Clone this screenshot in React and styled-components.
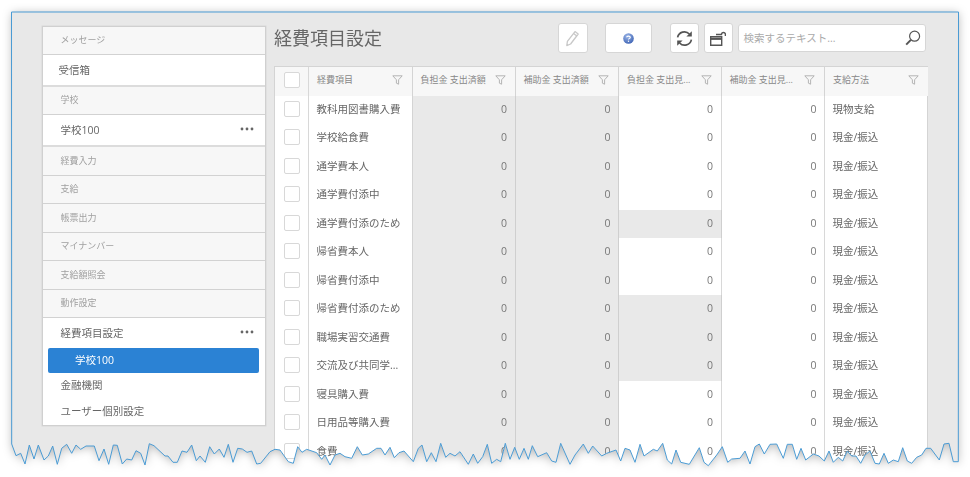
import React from "react";
import styled, { createGlobalStyle } from "styled-components";

const edge = [[11.7,444],[16,455.7],[20.7,453.3],[25,464],[29.3,445],[34,459],[38.3,445],[44,460],[48.3,456],[52.7,446],[57.3,464.3],[61.7,448.3],[66.7,444.3],[71.7,453.3],[76,445],[80.7,449.3],[86,446],[94.3,446],[99,460.7],[104,449],[108.7,464.3],[113.3,445],[117.3,445.3],[122.3,464],[126.7,459],[131.7,460],[136,450.7],[140.7,453.3],[145,465],[149.3,443.7],[154,445.7],[165,456],[168,456],[173,462.3],[177.3,462.3],[182,451],[187,452.3],[191.7,445],[196.3,460.7],[200,456],[205.3,462.3],[209.7,446.7],[214.3,454],[219.3,449],[224,457.3],[228.3,444.3],[233,462.3],[237.7,448.3],[242.3,449],[247,452.3],[251.7,451],[256.7,464],[260.7,463.3],[270,451.7],[275,449.3],[280,450],[288.3,461.7],[293.3,463.3],[297.7,446.7],[302,452.3],[306.7,449.3],[316.7,452.7],[321.7,459.3],[325,455],[330,465],[335,455],[340,453.3],[345,456.7],[351.7,458.3],[357.3,446.7],[362.3,455],[368.3,454],[376.7,448.3],[381,448.3],[385,455],[390,447.3],[394.3,457.7],[399,452.7],[404,451],[413.3,461.7],[418.3,448.3],[422,445],[426.7,461.7],[431.3,452.7],[436,461.7],[440.7,443.3],[445.7,457.3],[450,453.3],[455,456],[460,451.7],[468.3,464.3],[473.3,454],[477.7,463.3],[482.7,456.7],[487.3,444.3],[491.7,463.3],[496.7,459.3],[500.7,461.7],[505.3,443.3],[510,459.3],[514.7,447.3],[519.3,459.3],[524,448.3],[528.3,459.3],[532.3,445.7],[537.7,456.7],[546.7,452.7],[551.7,461],[556,462.3],[560.7,443.3],[570,464.3],[575,455],[583.3,444],[588.3,453.3],[592.7,446],[601.7,456],[606.7,453.3],[616,450],[620.7,461],[625,448.3],[630,450],[635,462.3],[640,444.3],[644,456],[653.3,449.3],[657.3,451],[662.7,443.3],[667.3,460],[671.7,464],[676,450],[680.7,462.3],[689.3,464.3],[699.3,447.7],[704,462.3],[708.3,465.7],[716.7,455],[722.3,446.7],[727.7,462.3],[731.7,459],[740,458.3],[745,451],[750,464],[755,446.7],[759.3,444],[764.3,454],[770,444.3],[776.7,444],[783.3,458.3],[787.3,444.3],[792.3,444.3],[796.7,459.3],[801,448.3],[805.7,460],[813.3,454],[819,456],[824.3,461],[829,451],[833.3,462.3],[838.3,457.3],[842.7,461],[847.3,451],[851.7,456],[856,456],[860.7,463.3],[865,455],[870,451],[875,463.3],[879.3,464],[884,453.3],[888.3,463.3],[893.3,460],[898.3,461.7],[902.7,447.7],[907.3,461],[911.7,463.3],[916.7,457.3],[921.7,455],[926,448.3],[930.7,448.3],[939.3,460],[944,444],[949,443.3],[953.3,461.7],[958.3,461.7]];

const WIN_X = 11.5;
const WIN_Y = 12;
const WIN_R = 958.5;
const outline = [[WIN_X, WIN_Y], [WIN_R, WIN_Y], ...edge.slice().reverse()];
const clip = `polygon(${outline.map(([x, y]) => `${x - WIN_X}px ${y - WIN_Y}px`).join(",")})`;
const outlinePts = outline.map((p) => p.join(",")).join(" ");

const GlobalStyle = createGlobalStyle`
  html, body { margin: 0; padding: 0; background: #fff; overflow: hidden; }
  body { font-family: "Open Sans", "Noto Sans CJK JP", sans-serif; }
  * { box-sizing: border-box; }
`;

const Frame = styled.div`
  position: relative;
  width: 970px;
  height: 477px;
  padding: 12px 0 0 11.5px;
  overflow: hidden;
`;

const Shadow = styled.div`
  width: 947px;
  height: 454px;
  filter: drop-shadow(0 1px 5px rgba(0, 0, 0, 0.28));
`;

const Sheet = styled.div`
  width: 947px;
  height: 454px;
  background: #e8e8e8;
  padding: 14px 0 0 30px;
  display: flex;
  gap: 8px;
  align-items: flex-start;
  overflow: hidden;
`;

const Outline = styled.svg`
  position: absolute;
  left: 0;
  top: 0;
  pointer-events: none;
`;

const Sidebar = styled.nav`
  width: 224.5px;
  flex: none;
  background: #fff;
  border: 1px solid #d0d0d0;
  box-shadow: 0 0 0 0.5px #d8d8d8;
`;

const NavHeader = styled.div`
  height: ${(p) => p.$h || 28.5}px;
  display: flex;
  align-items: center;
  padding: 0 0 1px 18px;
  background: #f7f7f7;
  border-bottom: 1px solid #d2d2d2;
  color: #a0a0a0;
  font-size: 9px;
`;

const NavItem = styled.div`
  height: ${(p) => p.$h}px;
  display: flex;
  align-items: center;
  justify-content: space-between;
  padding: 0 11.5px 1px ${(p) => p.$indent ?? 18}px;
  color: #666;
  font-size: 10.5px;
  border-bottom: ${(p) => (p.$rule ? "2px solid #dcdcdc" : "none")};
`;

const SelectedItem = styled.div`
  height: 25px;
  margin: 0 6.5px 0 5.5px;
  display: flex;
  align-items: center;
  padding: 0 0 1px 27px;
  background: #2b82d4;
  border-radius: 2px;
  color: #fff;
  font-size: 10.5px;
`;

const Main = styled.main`
  width: 654px;
  flex: none;
  margin-top: -3px;
`;

const Toolbar = styled.div`
  height: 30px;
  margin-bottom: 13px;
  padding-right: 2.5px;
  display: flex;
  align-items: center;
`;

const Title = styled.h1`
  flex: 1;
  margin: 0 0 3px;
  font-size: 18px;
  font-weight: 400;
  color: #666;
  font-family: "Noto Sans CJK JP", sans-serif;
`;

const ToolButton = styled.button`
  width: ${(p) => p.$w}px;
  height: 30px;
  margin-left: ${(p) => p.$ml}px;
  padding: 0;
  display: flex;
  align-items: center;
  justify-content: center;
  background: #fff;
  border: 1px solid #d6d6d6;
  border-radius: 3px;
`;

const Search = styled.div`
  width: 188px;
  height: 28px;
  margin-left: 5px;
  padding: 0 4px 1px 5px;
  display: flex;
  align-items: center;
  justify-content: space-between;
  background: #fff;
  border: 1px solid #d6d6d6;
  border-radius: 3px;
  color: #aaa;
  font-size: 10.5px;
`;

const Table = styled.div`
  display: grid;
  grid-template-columns: 34px 103.5px 103px 103.5px 102.5px 103.5px 103px;
  grid-auto-rows: 28.5px;
  background: #fff;
  border: 1px solid #d4d4d4;
  border-bottom: none;
`;

const HeadCell = styled.div`
  display: flex;
  align-items: center;
  justify-content: space-between;
  padding: 0 9px 3px 8px;
  background: #f7f7f7;
  color: #888;
  font-size: 9px;
  white-space: nowrap;
  border-right: ${(p) => (p.$last ? "none" : "1px solid #d4d4d4")};
`;

const CheckCell = styled.div`
  display: flex;
  align-items: center;
  justify-content: center;
  padding-bottom: 2px;
  background: ${(p) => (p.$head ? "#f7f7f7" : "#fff")};
  border-right: 1px solid #d8d8d8;
`;

const Check = styled.span`
  width: 16px;
  height: 16px;
  background: #fff;
  border: 1px solid #d8d8d8;
  border-radius: 2px;
`;

const TextCell = styled.div`
  display: flex;
  align-items: center;
  padding: 0 0 3px 7.5px;
  color: #666;
  font-size: 10.5px;
  white-space: nowrap;
  border-right: ${(p) => (p.$last ? "none" : "1px solid #d4d4d4")};
`;

const NumCell = styled.div`
  display: flex;
  align-items: center;
  justify-content: flex-end;
  padding: 0 7.5px 2px 0;
  background: ${(p) => (p.$grey ? "#e9e9e9" : "#fff")};
  color: #777;
  font-size: 10.5px;
  border-right: 1px solid ${(p) => (p.$grey ? "#cfcfcf" : "#d8d8d8")};
`;

const Dots = () => (
  <svg width="14" height="4" viewBox="0 0 14 4">
    <circle cx="2" cy="2" r="1.4" fill="#666" />
    <circle cx="7" cy="2" r="1.4" fill="#666" />
    <circle cx="12" cy="2" r="1.4" fill="#666" />
  </svg>
);

const Funnel = () => (
  <svg width="11" height="10" viewBox="0 0 11 10" fill="none" stroke="#b4b4b4" strokeWidth="1">
    <path d="M.8 .8h9.4L6.6 4.8V9.2L4.4 8.2V4.8Z" strokeLinejoin="round" />
  </svg>
);

const Pencil = () => (
  <svg width="15" height="17" viewBox="0 0 15 17" fill="none" stroke="#c8c8c8" strokeWidth="1.3">
    <path d="M10 1.6 13.2 4 5.6 14 1.8 15.6 2.4 11.4Z" strokeLinejoin="round" />
    <path d="M8.6 3.4 11.8 5.9" />
  </svg>
);

const HelpGlobe = () => (
  <svg width="11" height="11" viewBox="0 0 11 11">
    <defs>
      <radialGradient id="globe" cx="40%" cy="30%" r="75%">
        <stop offset="0" stopColor="#9db7e8" />
        <stop offset="1" stopColor="#3c62b4" />
      </radialGradient>
    </defs>
    <circle cx="5.5" cy="5.5" r="5.3" fill="url(#globe)" />
    <path d="M3.6 4.2C3.8 2.7 7.2 2.7 7.3 4.2 7.4 5.4 5.5 5.3 5.5 6.6" fill="none" stroke="#fff" strokeWidth="1.1" />
    <circle cx="5.5" cy="8.3" r=".7" fill="#fff" />
  </svg>
);

const Refresh = () => (
  <svg width="17" height="17" viewBox="0 0 17 17" fill="none" stroke="#555" strokeWidth="1.7">
    <path d="M1.6 7.4A6.9 6.9 0 0 1 13.4 4" />
    <path d="M15.8 1.2V6.6H10.4Z" fill="#555" stroke="none" />
    <path d="M15.4 9.6A6.9 6.9 0 0 1 3.6 13" />
    <path d="M1.2 15.8V10.4H6.6Z" fill="#555" stroke="none" />
  </svg>
);

const Unlock = () => (
  <svg width="16" height="15" viewBox="0 0 16 15" fill="none" stroke="#555">
    <path d="M.7 5.7H11.7V14.3H.7Z" strokeWidth="1.4" />
    <path d="M.7 7.8H11.7" strokeWidth="2.2" />
    <path d="M6 3.5H11.5V3A2 2 0 0 1 15.4 3V5" strokeWidth="1.4" />
  </svg>
);

const Magnifier = () => (
  <svg width="16" height="16" viewBox="0 0 16 16" fill="none" stroke="#555">
    <circle cx="9.6" cy="6.2" r="5" strokeWidth="1.2" />
    <path d="M5.9 9.9 1.2 14.6" strokeWidth="2" />
  </svg>
);

const headers = ["経費項目", "負担金 支出済額", "補助金 支出済額", "負担金 支出見...", "補助金 支出見...", "支給方法"];
const rows = [
  ["教科用図書購入費", "現物支給"],
  ["学校給食費", "現金/振込"],
  ["通学費本人", "現金/振込"],
  ["通学費付添中", "現金/振込"],
  ["通学費付添のため", "現金/振込", true],
  ["帰省費本人", "現金/振込"],
  ["帰省費付添中", "現金/振込"],
  ["帰省費付添のため", "現金/振込", true],
  ["職場実習交通費", "現金/振込", true],
  ["交流及び共同学...", "現金/振込", true],
  ["寝具購入費", "現金/振込"],
  ["日用品等購入費", "現金/振込"],
  ["食費", "現金/振込"],
];

export default function App() {
  return (
    <>
      <GlobalStyle />
      <Frame>
        <Shadow>
          <Sheet style={{ clipPath: clip }}>
            <Sidebar>
              <NavHeader $h={27.5}>メッセージ</NavHeader>
              <NavItem $h={32.5} $indent={16} $rule>受信箱</NavItem>
              <NavHeader $h={27.5}>学校</NavHeader>
              <NavItem $h={32.5} $rule>学校100<Dots /></NavItem>
              <NavHeader>経費入力</NavHeader>
              <NavHeader>支給</NavHeader>
              <NavHeader>帳票出力</NavHeader>
              <NavHeader>マイナンバー</NavHeader>
              <NavHeader>支給額照会</NavHeader>
              <NavHeader>動作設定</NavHeader>
              <NavItem $h={29.5}>経費項目設定<Dots /></NavItem>
              <SelectedItem>学校100</SelectedItem>
              <NavItem $h={25}>金融機関</NavItem>
              <NavItem $h={27}>ユーザー個別設定</NavItem>
            </Sidebar>
            <Main>
              <Toolbar>
                <Title>経費項目設定</Title>
                <ToolButton $w={30} $ml={0}><Pencil /></ToolButton>
                <ToolButton $w={47} $ml={17}><HelpGlobe /></ToolButton>
                <ToolButton $w={29} $ml={18.5}><Refresh /></ToolButton>
                <ToolButton $w={29} $ml={4.5}><Unlock /></ToolButton>
                <Search>
                  検索するテキスト...
                  <Magnifier />
                </Search>
              </Toolbar>
              <Table>
                <CheckCell $head><Check /></CheckCell>
                {headers.map((h, i) => (
                  <HeadCell key={h + i} $last={i === headers.length - 1}>
                    {h}
                    <Funnel />
                  </HeadCell>
                ))}
                {rows.map(([name, method, shaded]) => (
                  <React.Fragment key={name}>
                    <CheckCell><Check /></CheckCell>
                    <TextCell>{name}</TextCell>
                    <NumCell $grey>0</NumCell>
                    <NumCell $grey>0</NumCell>
                    <NumCell $grey={shaded}>0</NumCell>
                    <NumCell>0</NumCell>
                    <TextCell $last>{method}</TextCell>
                  </React.Fragment>
                ))}
              </Table>
            </Main>
          </Sheet>
        </Shadow>
        <Outline width="970" height="477" viewBox="0 0 970 477">
          <polygon points={outlinePts} fill="none" stroke="#4a9bd4" strokeWidth="1" strokeLinejoin="round" />
        </Outline>
      </Frame>
    </>
  );
}
